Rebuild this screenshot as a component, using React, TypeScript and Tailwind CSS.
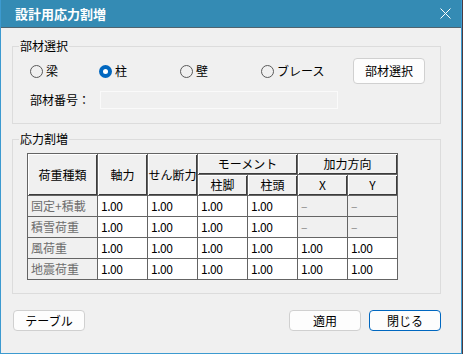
import React from "react";

const FONT = "font-['Noto_Sans_CJK_JP','Noto_Sans',sans-serif]";

function Radio({ label, checked, width }: { label: string; checked?: boolean; width: string }) {
  return (
    <div className={`flex items-center gap-[3px] ${width}`}>
      {checked ? (
        <span className="w-[13px] h-[13px] rounded-full bg-[#0067c0] flex items-center justify-center">
          <span className="w-[5px] h-[5px] rounded-full bg-white" />
        </span>
      ) : (
        <span className="w-[13px] h-[13px] rounded-full border border-[#5a5a5a]" />
      )}
      <span className="text-[12px] leading-[16px] text-black">{label}</span>
    </div>
  );
}

function Btn({ label, primary }: { label: string; primary?: boolean }) {
  return (
    <button
      className={`w-[72px] h-[21px] rounded-[4px] bg-[#fdfdfd] text-[12px] leading-[16px] text-black flex items-center justify-center border ${
        primary ? "border-[#0067c0]" : "border-[#d0d0d0]"
      }`}
    >
      {label}
    </button>
  );
}

const HEAD =
  "bg-[#f0f0f0] border-r border-b border-[#646464] shadow-[inset_1px_1px_0_#ffffff,inset_-1px_-1px_0_#3c3c3c] flex items-center justify-center text-[12px] text-black";
const CELL = "border-r border-b border-[#646464] h-[21px] flex items-center pl-[3px] text-[12px] tracking-[-0.5px]";

const ROWS: { name: string; xy: boolean }[] = [
  { name: "固定+積載", xy: false },
  { name: "積雪荷重", xy: false },
  { name: "風荷重", xy: true },
  { name: "地震荷重", xy: true },
];

export default function App() {
  return (
    <div className={`w-[463px] h-[354px] bg-[#4b3a40] ${FONT}`}>
      <div className="w-[462px] h-[354px] flex flex-col bg-[#f0f0f0] border-l border-r border-b border-[#3c9ad0]">
        {/* Title bar */}
        <div className="h-[28px] shrink-0 bg-[#348bb4] border-b border-[#4f6470] flex items-center justify-between pl-[14px] pr-[10px]">
          <span className="text-[13px] font-bold text-white leading-[16px]">設計用応力割増</span>
          <svg width="11" height="11" viewBox="0 0 11 11">
            <path d="M0.5 0.5L10.5 10.5M10.5 0.5L0.5 10.5" stroke="#ffffff" strokeWidth="1" />
          </svg>
        </div>

        <div className="flex flex-col pl-[11px]">
          {/* 部材選択 */}
          <fieldset className="mt-[10px] w-[429px] h-[86px] border border-[#dcdcdc]">
            <legend className="ml-[6px] px-[1px] text-[12px] leading-[16px] text-black">部材選択</legend>
            <div className="mt-[4px] h-[26px] flex items-center pl-[17px]">
              <Radio label="梁" width="w-[69px]" />
              <Radio label="柱" checked width="w-[81px]" />
              <Radio label="壁" width="w-[81px]" />
              <Radio label="ブレース" width="w-[92px]" />
              <button className="w-[72px] h-[26px] rounded-[4px] bg-[#fdfdfd] border border-[#d0d0d0] text-[12px] text-black">
                部材選択
              </button>
            </div>
            <div className="mt-[7px] h-[18px] flex items-center pl-[17px]">
              <span className="w-[70px] text-[12px] leading-[16px] text-black">部材番号：</span>
              <div className="w-[238px] h-[18px] border border-[#fafafa] bg-[#f0f0f0]" />
            </div>
          </fieldset>

          {/* 応力割増 */}
          <fieldset className="mt-[7px] w-[429px] h-[163px] border border-[#dcdcdc]">
            <legend className="ml-[6px] px-[1px] text-[12px] leading-[16px] text-black">応力割増</legend>
            <div className="mt-[6px] ml-[14px] w-[371px] grid grid-cols-[70px_repeat(6,50px)] grid-rows-[repeat(6,21px)] border-l border-t border-[#646464] leading-[16px]">
              <div className={`${HEAD} row-span-2`}>荷重種類</div>
              <div className={`${HEAD} row-span-2`}>軸力</div>
              <div className={`${HEAD} row-span-2`}>せん断力</div>
              <div className={`${HEAD} col-span-2`}>モーメント</div>
              <div className={`${HEAD} col-span-2`}>加力方向</div>
              <div className={HEAD}>柱脚</div>
              <div className={HEAD}>柱頭</div>
              <div className={HEAD}>X</div>
              <div className={HEAD}>Y</div>
              {ROWS.map((r) => (
                <React.Fragment key={r.name}>
                  <div className={`${CELL} bg-[#f0f0f0] text-[#6d6d6d] tracking-normal pl-[1px]`}>{r.name}</div>
                  <div className={`${CELL} bg-white text-black`}>1.00</div>
                  <div className={`${CELL} bg-white text-black`}>1.00</div>
                  <div className={`${CELL} bg-white text-black`}>1.00</div>
                  <div className={`${CELL} bg-white text-black`}>1.00</div>
                  {r.xy ? (
                    <>
                      <div className={`${CELL} bg-white text-black`}>1.00</div>
                      <div className={`${CELL} bg-white text-black`}>1.00</div>
                    </>
                  ) : (
                    <>
                      <div className={`${CELL} bg-[#f0f0f0] text-[#8a8a8a]`}>–</div>
                      <div className={`${CELL} bg-[#f0f0f0] text-[#8a8a8a]`}>–</div>
                    </>
                  )}
                </React.Fragment>
              ))}
            </div>
          </fieldset>

          {/* Buttons */}
          <div className="mt-[16px] w-[429px] flex items-center">
            <div className="ml-[1px]">
              <Btn label="テーブル" />
            </div>
            <div className="ml-auto flex gap-[8px]">
              <Btn label="適用" />
              <Btn label="閉じる" primary />
            </div>
          </div>
        </div>
      </div>
    </div>
  );
}
